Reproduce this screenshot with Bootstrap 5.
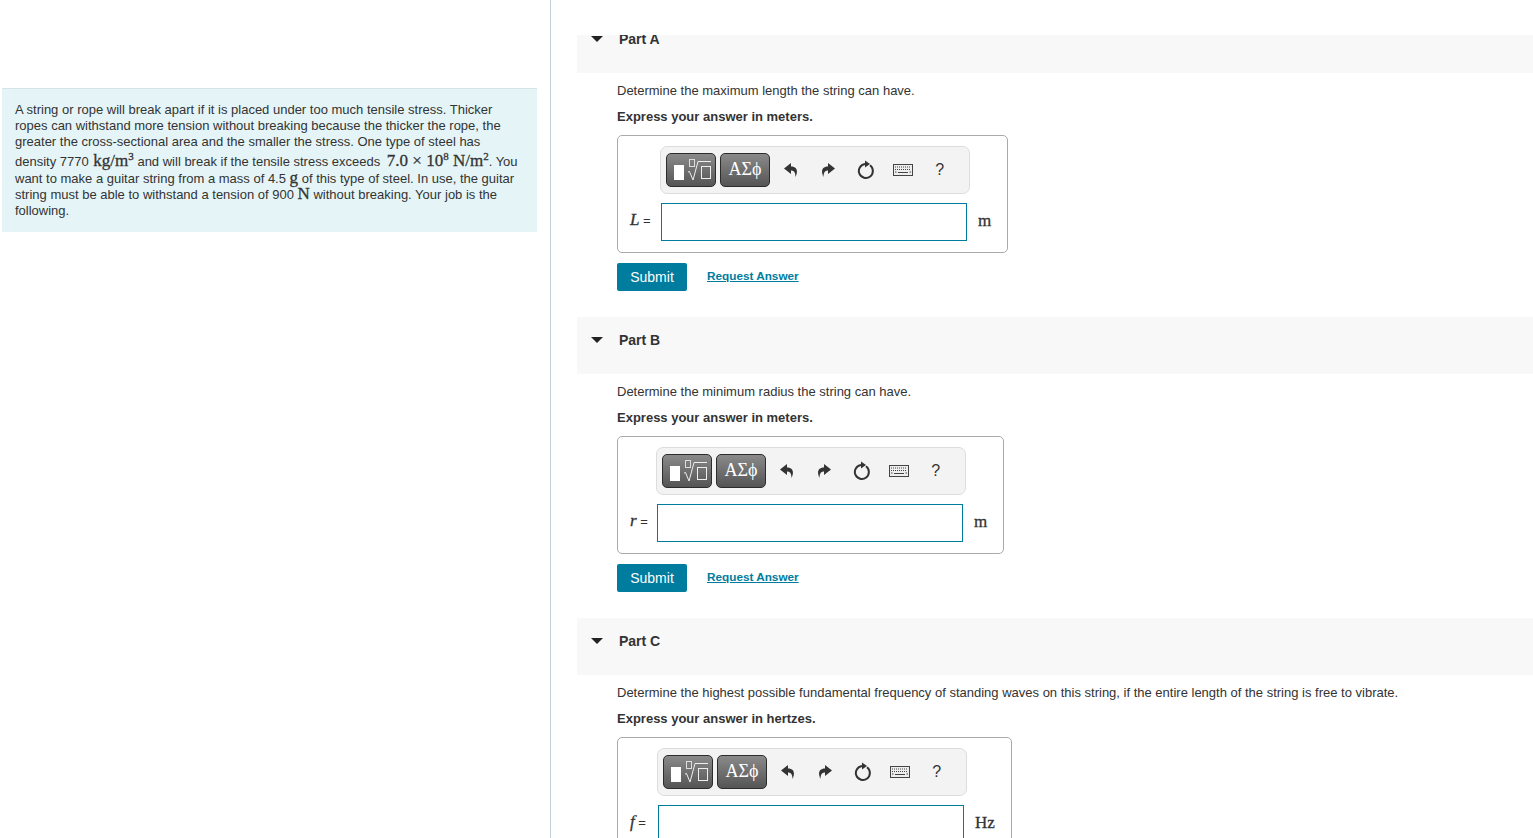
<!DOCTYPE html>
<html lang="en">
<head>
    <meta charset="UTF-8">
    <meta name="viewport" content="width=device-width, initial-scale=1.0">
    <title>Guitar String Problem</title>
    <link href="https://cdn.jsdelivr.net/npm/bootstrap@5.3.0/dist/css/bootstrap.min.css" rel="stylesheet">
    <style>
        body { font-family: "Liberation Sans", Arial, sans-serif; font-size: 13px; line-height: 16px; color: #333; height: 838px; overflow: hidden; }
        .left-pane { width: 551px; height: 838px; padding: 88px 13px 0 2px; border-right: 1px solid #c3d3dc; flex: none; }
        .intro-box { background: #e5f5f7; border-top: 1px solid #d5e3e6; padding: 13px 15px 13px 13px; height: 144px; }
        .tex { font-family: "Liberation Serif", serif; font-size: 17px; line-height: 0; -webkit-text-stroke: .3px; }
        .tex sup { font-size: 11px; top: -6px; line-height: 0; }
        .tex-tall { display: inline-block; line-height: 16px; padding: 3px 0 2px; margin-left: 1px; }
        .tex-wide { margin-left: 3px; }
        .right-pane { flex: 1; padding: 35px 0 0 26px; min-width: 0; }
        .part-head { background: #f8f8f8; height: 57px; padding: 15px 0 0 14px; font-size: 14px; font-weight: bold; }
        .part-first { height: 38px; padding-top: 0; overflow: hidden; }
        .part-first .part-title { margin-top: -4px; }
        .caret-down { width: 0; height: 0; border: 6px solid transparent; border-top: 6px solid #222; border-bottom: 0; margin: 5px 16px 0 0; }
        .part-first .caret-down { margin-top: 1px; }
        .part-body { padding: 10px 0 26px 40px; }
        .prompt { margin-bottom: 10px; }
        .prompt-last { margin-bottom: 10px; font-weight: bold; }
        .answer-box { width: fit-content; border: 1px solid #aaa; border-radius: 5px; padding: 10px 16px 11px 12px; }
        .box-a { --label-w: 31px; }
        .box-b { --label-w: 27px; }
        .box-c { --label-w: 28px; }
        .tool-row { width: 310px; height: 48px; background: #f3f3f3; border: 1px solid #ddd; border-radius: 7px; padding: 6px 0 0 5px; margin: 0 0 9px calc(var(--label-w) - 1px); }
        .tpl-btn { width: 50px; height: 34px; border: 1px solid #2c2c2c; border-radius: 5px; background: linear-gradient(#8a8a8a, #555); color: #fff; padding: 0; }
        .tpl-greek { font-family: "Liberation Serif", serif; font-size: 18px; line-height: 30px; text-align: center; }
        .tool-group { margin-left: 2px; }
        .tool-icon { width: 37.5px; height: 34px; color: #333; }
        .tool-help { font-size: 16px; margin-left: -1px; }
        .var-label { width: var(--label-w); font-size: 13px; margin-top: -3px; }
        .var-label i { font-family: "Liberation Serif", serif; font-size: 17px; -webkit-text-stroke: .3px; }
        .answer-input { width: 306px; height: 38px; border: 1px solid #007c9e; border-radius: 0; padding: 0 6px; }
        .unit { font-family: "Liberation Serif", serif; font-size: 17px; -webkit-text-stroke: .3px; padding-left: 11px; margin-top: -2px; }
        .submit-btn { width: 70px; height: 28px; padding: 0; background: #007c9e; border: 0; border-radius: 2px; color: #fff; font-size: 14px; }
        .submit-btn:hover { background: #006a87; color: #fff; }
        .submit-row { margin-top: 10px; }
        .answer-link { color: #007c9e; font-size: 11.75px; font-weight: bold; text-decoration: underline; margin: -2px 0 0 20px; }
    </style>
</head>
<body>
    <svg width="0" height="0" class="position-absolute">
        <symbol id="ic-tpl" viewBox="0 0 50 34">
            <rect x="8" y="12" width="10" height="15" fill="#fff"/>
            <rect x="23.500" y="6.500" width="5" height="7" fill="none" stroke="#ddd"/>
            <path d="M22 19l1.500-.5L27 27l5-18.500h13" fill="none" stroke="#eee"/>
            <rect x="35.500" y="13.500" width="9" height="12" fill="none" stroke="#eee"/>
        </symbol>
        <symbol id="ic-undo" viewBox="0 0 14 16">
            <path d="M7 1 0 6.500 7 12V8.500c3 0 4.500 2 4.500 6.500 2-4 3-10.500-4.500-10.500z" fill="currentColor"/>
        </symbol>
        <symbol id="ic-redo" viewBox="0 0 14 16">
            <path d="M7 1 14 6.500 7 12V8.500c-3 0-4.500 2-4.500 6.500-2-4-3-10.500 4.500-10.500z" fill="currentColor"/>
        </symbol>
        <symbol id="ic-reset" viewBox="0 0 18 20">
            <path d="M8 4a7 7 0 1 0 5 1.300" fill="none" stroke="currentColor" stroke-width="2"/>
            <path d="M8 .5v7l5-3.500z" fill="currentColor"/>
        </symbol>
        <symbol id="ic-keys" viewBox="0 0 20 12">
            <rect x=".5" y=".5" width="19" height="11" fill="#eee" stroke="#444"/>
            <path d="M2 3h16M2 5.500h16" stroke="#444" stroke-dasharray="1 1" fill="none"/>
            <path d="M2 8h1.500M16.500 8H18M5 8.500h10" stroke="#444" fill="none"/>
        </symbol>
    </svg>

    <div class="d-flex">
        <div class="left-pane">
            <div class="intro-box">
                A string or rope will break apart if it is placed under too much tensile stress. Thicker ropes can withstand more tension without breaking because the thicker the rope, the greater the cross-sectional area and the smaller the stress. One type of steel has density 7770 <span class="tex tex-tall">kg/m<sup>3</sup></span> and will break if the tensile stress exceeds <span class="tex tex-wide">7.0 × 10<sup>8</sup> N/m<sup>2</sup></span>. You want to make a guitar string from a mass of 4.5 <span class="tex">g</span> of this type of steel. In use, the guitar string must be able to withstand a tension of 900 <span class="tex">N</span> without breaking. Your job is the following.
            </div>
        </div>

        <div class="right-pane" id="parts"></div>
    </div>

    <script>
        const parts = [
            { name: 'Part A', first: true, prompt: 'Determine the maximum length the string can have.', unitText: 'meters', label: 'L', boxClass: 'box-a', unit: 'm' },
            { name: 'Part B', prompt: 'Determine the minimum radius the string can have.', unitText: 'meters', label: 'r', boxClass: 'box-b', unit: 'm' },
            { name: 'Part C', prompt: 'Determine the highest possible fundamental frequency of standing waves on this string, if the entire length of the string is free to vibrate.', unitText: 'hertzes', label: 'f', boxClass: 'box-c', unit: 'Hz' }
        ];

        const icon = (id, w, h) => `<div class="tool-icon d-flex align-items-center justify-content-center"><svg width="${w}" height="${h}"><use href="#${id}"/></svg></div>`;

        document.getElementById('parts').innerHTML = parts.map(p => `
            <div class="part-head d-flex ${p.first ? 'part-first' : ''}">
                <div class="caret-down"></div>
                <div class="part-title">${p.name}</div>
            </div>
            <div class="part-body">
                <div class="prompt">${p.prompt}</div>
                <div class="prompt-last">Express your answer in ${p.unitText}.</div>
                <div class="answer-box ${p.boxClass}">
                    <div class="tool-row d-flex">
                        <div class="tpl-btn"><svg width="48" height="32" viewBox="1 1 48 32"><use href="#ic-tpl" width="50" height="34"/></svg></div>
                        <div class="tpl-btn tpl-greek ms-1">ΑΣϕ</div>
                        <div class="d-flex tool-group">
                            ${icon('ic-undo', 14, 16)}${icon('ic-redo', 14, 16)}${icon('ic-reset', 18, 20)}${icon('ic-keys', 20, 12)}
                            <div class="tool-icon tool-help d-flex align-items-center justify-content-center">?</div>
                        </div>
                    </div>
                    <div class="d-flex align-items-center">
                        <div class="var-label"><i>${p.label}</i> =</div>
                        <input type="text" class="form-control answer-input">
                        <div class="unit">${p.unit}</div>
                    </div>
                </div>
                <div class="d-flex align-items-center submit-row">
                    <button class="btn submit-btn">Submit</button>
                    <a href="#" class="answer-link">Request Answer</a>
                </div>
            </div>`).join('');
    </script>
    <script src="https://cdn.jsdelivr.net/npm/bootstrap@5.3.0/dist/js/bootstrap.bundle.min.js"></script>
</body>
</html>
